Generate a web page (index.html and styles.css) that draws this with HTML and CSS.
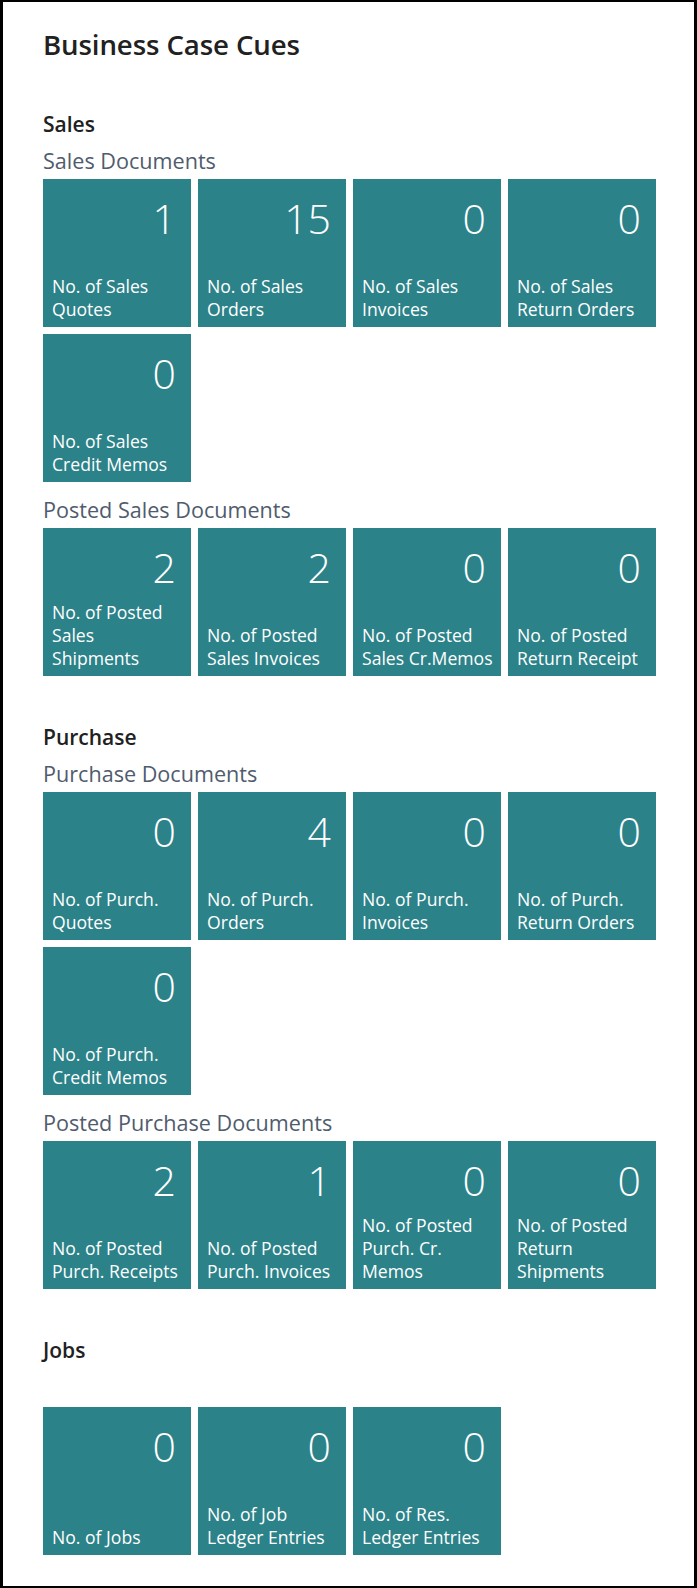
FILE: index.html
```html
<!DOCTYPE html>
<html lang="en">
<head>
<meta charset="utf-8">
<title>Business Case Cues</title>
<link rel="stylesheet" href="styles.css">
</head>
<body>
<div class="frame">
  <h1 class="page-title">Business Case Cues</h1>

  <section class="section">
    <h2 class="section-title">Sales</h2>
    <div class="group">
      <h3 class="group-title">Sales Documents</h3>
      <div class="tiles">
        <div class="tile"><div class="num">1</div><div class="label">No. of Sales<br>Quotes</div></div>
        <div class="tile"><div class="num">15</div><div class="label">No. of Sales<br>Orders</div></div>
        <div class="tile"><div class="num">0</div><div class="label">No. of Sales<br>Invoices</div></div>
        <div class="tile"><div class="num">0</div><div class="label">No. of Sales<br>Return Orders</div></div>
        <div class="tile"><div class="num">0</div><div class="label">No. of Sales<br>Credit Memos</div></div>
      </div>
    </div>
    <div class="group">
      <h3 class="group-title">Posted Sales Documents</h3>
      <div class="tiles">
        <div class="tile"><div class="num">2</div><div class="label">No. of Posted<br>Sales<br>Shipments</div></div>
        <div class="tile"><div class="num">2</div><div class="label">No. of Posted<br>Sales Invoices</div></div>
        <div class="tile"><div class="num">0</div><div class="label">No. of Posted<br>Sales Cr.Memos</div></div>
        <div class="tile"><div class="num">0</div><div class="label">No. of Posted<br>Return Receipt</div></div>
      </div>
    </div>
  </section>

  <section class="section">
    <h2 class="section-title">Purchase</h2>
    <div class="group">
      <h3 class="group-title">Purchase Documents</h3>
      <div class="tiles">
        <div class="tile"><div class="num">0</div><div class="label">No. of Purch.<br>Quotes</div></div>
        <div class="tile"><div class="num">4</div><div class="label">No. of Purch.<br>Orders</div></div>
        <div class="tile"><div class="num">0</div><div class="label">No. of Purch.<br>Invoices</div></div>
        <div class="tile"><div class="num">0</div><div class="label">No. of Purch.<br>Return Orders</div></div>
        <div class="tile"><div class="num">0</div><div class="label">No. of Purch.<br>Credit Memos</div></div>
      </div>
    </div>
    <div class="group">
      <h3 class="group-title">Posted Purchase Documents</h3>
      <div class="tiles">
        <div class="tile"><div class="num">2</div><div class="label">No. of Posted<br>Purch. Receipts</div></div>
        <div class="tile"><div class="num">1</div><div class="label">No. of Posted<br>Purch. Invoices</div></div>
        <div class="tile"><div class="num">0</div><div class="label">No. of Posted<br>Purch. Cr.<br>Memos</div></div>
        <div class="tile"><div class="num">0</div><div class="label">No. of Posted<br>Return<br>Shipments</div></div>
      </div>
    </div>
  </section>

  <section class="section">
    <h2 class="section-title">Jobs</h2>
    <div class="group">
      <h3 class="group-title empty"></h3>
      <div class="tiles">
        <div class="tile"><div class="num">0</div><div class="label">No. of Jobs</div></div>
        <div class="tile"><div class="num">0</div><div class="label">No. of Job<br>Ledger Entries</div></div>
        <div class="tile"><div class="num">0</div><div class="label">No. of Res.<br>Ledger Entries</div></div>
      </div>
    </div>
  </section>
</div>
</body>
</html>
```

FILE: styles.css
```css
* { box-sizing: border-box; }

html, body {
  margin: 0;
  padding: 0;
  background: #ffffff;
}

body {
  font-family: "Open Sans", "Noto Sans", "Liberation Sans", sans-serif;
  color: #212121;
}

.frame {
  width: 697px;
  height: 1588px;
  border-style: solid;
  border-color: #000000;
  border-width: 2px 3px 2px 3px;
  padding: 24px 0 0 40px;
  background: #ffffff;
  overflow: hidden;
}

.page-title {
  margin: 0;
  font-size: 27.6px;
  font-weight: 600;
  line-height: 36px;
  color: #212121;
  letter-spacing: -0.1px;
}

.section {
  margin-top: 47px;
}

.page-title + .section {
  margin-top: 48px;
}

.section-title {
  margin: 0 0 9px 0;
  font-size: 21px;
  font-weight: 600;
  line-height: 28px;
  color: #212121;
}

.group + .group {
  margin-top: 14px;
}

.group-title {
  margin: 0 0 4px 0;
  height: 28px;
  font-size: 21.6px;
  font-weight: 400;
  line-height: 28px;
  color: #505c6d;
}

.group-title.empty {
  height: 30px;
}

.tiles {
  display: grid;
  grid-template-columns: repeat(4, 148px);
  grid-auto-rows: 148px;
  column-gap: 7px;
  row-gap: 7px;
}

.tile {
  background: #2c8289;
  color: #ffffff;
  display: flex;
  flex-direction: column;
  justify-content: space-between;
  padding: 19px 15px 6px 9px;
}

.num {
  font-size: 41px;
  font-weight: 300;
  line-height: 40px;
  text-align: right;
}

.label {
  font-size: 17.6px;
  font-weight: 400;
  line-height: 23px;
  white-space: nowrap;
}
```
